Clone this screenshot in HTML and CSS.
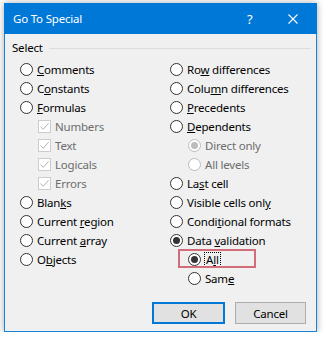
FILE: index.html
```html
<!DOCTYPE html>
<html lang="en">

<head>
    <meta charset="UTF-8">
    <title>Go To Special</title>
    <link rel="stylesheet" href="styles.css">
</head>

<body>
    <div class="dialog">
        <div class="titlebar">
            <span class="title">Go To Special</span>
            <span class="help">?</span>
            <svg class="close" width="10" height="10" viewBox="0 0 10 10">
                <path d="M0.5 0.5 L9.5 9.5 M9.5 0.5 L0.5 9.5" stroke="#fff" stroke-width="1.1" fill="none"/>
            </svg>
        </div>
        <div class="body">
            <div class="legend"><span>Select</span><span class="rule"></span></div>
            <div class="cols">
                <div class="col">
                    <div class="row"><span class="radio"></span><span><u>C</u>omments</span></div>
                    <div class="row"><span class="radio"></span><span>C<u>o</u>nstants</span></div>
                    <div class="row"><span class="radio"></span><span><u>F</u>ormulas</span></div>
                    <div class="row sub off"><span class="check"><svg width="11" height="11" viewBox="0 0 11 11"><path d="M1.5 5.5 L4.2 8.3 L9.6 2.2" stroke="#b5b5b5" stroke-width="1" fill="none"/></svg></span><span>Numbers</span></div>
                    <div class="row sub off"><span class="check"><svg width="11" height="11" viewBox="0 0 11 11"><path d="M1.5 5.5 L4.2 8.3 L9.6 2.2" stroke="#b5b5b5" stroke-width="1" fill="none"/></svg></span><span>Text</span></div>
                    <div class="row sub off"><span class="check"><svg width="11" height="11" viewBox="0 0 11 11"><path d="M1.5 5.5 L4.2 8.3 L9.6 2.2" stroke="#b5b5b5" stroke-width="1" fill="none"/></svg></span><span>Logicals</span></div>
                    <div class="row sub off"><span class="check"><svg width="11" height="11" viewBox="0 0 11 11"><path d="M1.5 5.5 L4.2 8.3 L9.6 2.2" stroke="#b5b5b5" stroke-width="1" fill="none"/></svg></span><span>Errors</span></div>
                    <div class="row"><span class="radio"></span><span>Blan<u>k</u>s</span></div>
                    <div class="row"><span class="radio"></span><span>Current <u>r</u>egion</span></div>
                    <div class="row"><span class="radio"></span><span>Current <u>a</u>rray</span></div>
                    <div class="row"><span class="radio"></span><span>O<u>b</u>jects</span></div>
                </div>
                <div class="col">
                    <div class="row"><span class="radio"></span><span>Ro<u>w</u> differences</span></div>
                    <div class="row"><span class="radio"></span><span>Colu<u>m</u>n differences</span></div>
                    <div class="row"><span class="radio"></span><span><u>P</u>recedents</span></div>
                    <div class="row"><span class="radio"></span><span><u>D</u>ependents</span></div>
                    <div class="row sub off"><span class="radio on"></span><span>Direct only</span></div>
                    <div class="row sub off"><span class="radio"></span><span>All levels</span></div>
                    <div class="row"><span class="radio"></span><span>La<u>s</u>t cell</span></div>
                    <div class="row"><span class="radio"></span><span>Visible cells onl<u>y</u></span></div>
                    <div class="row"><span class="radio"></span><span>Condi<u>t</u>ional formats</span></div>
                    <div class="row"><span class="radio on"></span><span>Data <u>v</u>alidation</span></div>
                    <div class="row sub marked"><span class="radio on"></span><span class="focus">A<u>l</u>l</span></div>
                    <div class="row sub"><span class="radio"></span><span>Sam<u>e</u></span></div>
                </div>
            </div>
            <div class="buttons">
                <button class="btn default">OK</button>
                <button class="btn">Cancel</button>
            </div>
        </div>
    </div>
</body>

</html>
```

FILE: styles.css
```css
body {
    margin: 0;
    padding: 3px 0 0 4px;
    background-color: #fff;
    font-family: "Noto Sans", "Open Sans", sans-serif;
    font-size: 11.5px;
    letter-spacing: -0.2px;
    color: #000;
}

.dialog {
    width: 313px;
    height: 329px;
    box-sizing: border-box;
    border: 1px solid #1883d7;
    border-top: none;
    background-color: #f0f0f0;
    box-shadow: 0 0 7px rgba(0, 0, 0, 0.35);
    display: flex;
    flex-direction: column;
}

.titlebar {
    height: 31px;
    margin: 0 -1px;
    background-color: #0078d7;
    color: #fff;
    display: flex;
    align-items: center;
    padding-left: 9px;
}

.title {
    flex: 1;
}

.help {
    font-size: 13px;
    width: 12px;
    margin-right: 29px;
}

.close {
    margin-right: 19px;
}

.body {
    flex: 1;
    display: flex;
    flex-direction: column;
}

.legend {
    display: flex;
    align-items: center;
    height: 14px;
    margin-top: 7px;
    padding: 0 5px 0 7px;
    line-height: 14px;
}

.legend .rule {
    flex: 1;
    height: 1px;
    background-color: #dcdcdc;
    margin-left: 6px;
}

.cols {
    display: grid;
    grid-template-columns: 150px 1fr;
    padding-left: 15px;
    margin-top: 5px;
    height: 237px;
}

.row {
    height: 19px;
    display: flex;
    align-items: center;
    gap: 4px;
    white-space: nowrap;
}

.row.sub {
    padding-left: 18px;
}

.row.off {
    color: #6d6d6d;
}

.radio {
    width: 13px;
    height: 13px;
    box-sizing: border-box;
    border: 1px solid #333;
    border-radius: 50%;
    background-color: #fff;
    display: flex;
    align-items: center;
    justify-content: center;
    flex-shrink: 0;
}

.radio.on::after {
    content: "";
    width: 7px;
    height: 7px;
    border-radius: 50%;
    background-color: #333;
}

.off .radio {
    border-color: #bcbcbc;
}

.off .radio.on::after {
    background-color: #bcbcbc;
}

.check {
    width: 13px;
    height: 13px;
    box-sizing: border-box;
    border: 1px solid #cccccc;
    background-color: #fff;
    display: flex;
    align-items: center;
    justify-content: center;
}

.marked {
    position: relative;
}

.marked::before {
    content: "";
    position: absolute;
    left: 8px;
    top: -1px;
    width: 74px;
    height: 15px;
    border: 2px solid #d26d7b;
}

.focus {
    outline: 1px dotted #000;
    outline-offset: 0;
    padding: 0 1px;
    line-height: 13px;
}

.buttons {
    display: flex;
    justify-content: flex-end;
    gap: 10px;
    padding-right: 10px;
    margin-top: 5px;
}

.btn {
    width: 71px;
    height: 22px;
    font-family: "Noto Sans", "Open Sans", sans-serif;
    font-size: 11.5px;
    letter-spacing: -0.2px;
    background-color: #e1e1e1;
    border: 1px solid #adadad;
    color: #000;
    padding: 0;
}

.btn.default {
    width: 73px;
    border: 2px solid #0078d7;
}
```
